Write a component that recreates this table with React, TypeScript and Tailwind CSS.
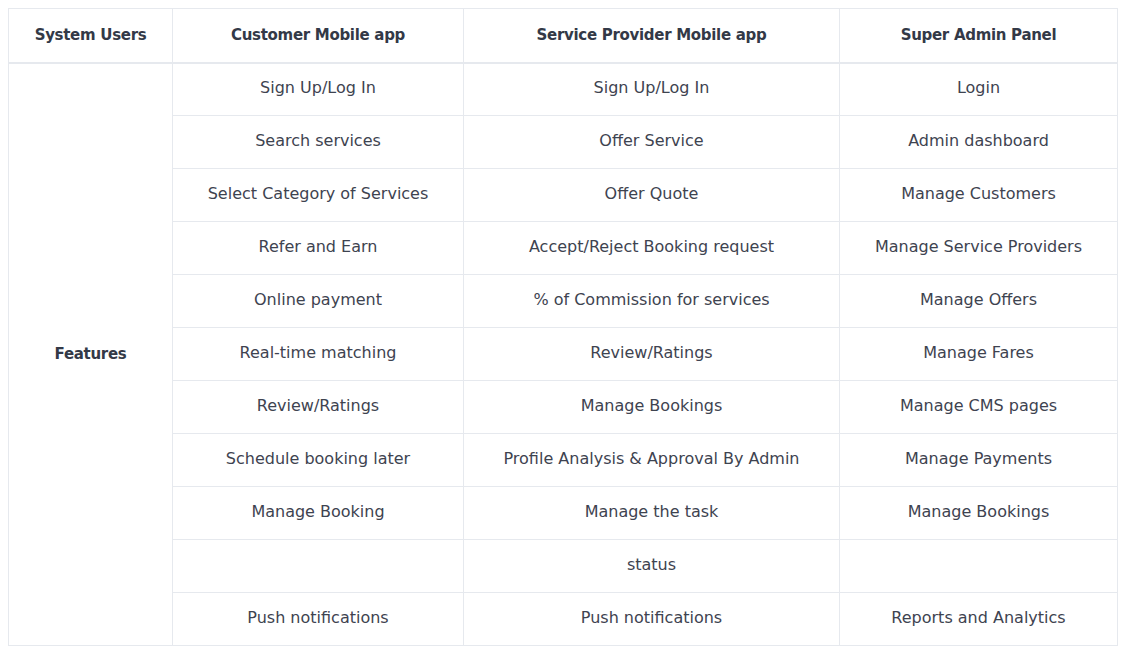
const rows: [string, string, string][] = [
  ["Sign Up/Log In", "Sign Up/Log In", "Login"],
  ["Search services", "Offer Service", "Admin dashboard"],
  ["Select Category of Services", "Offer Quote", "Manage Customers"],
  ["Refer and Earn", "Accept/Reject Booking request", "Manage Service Providers"],
  ["Online payment", "% of Commission for services", "Manage Offers"],
  ["Real-time matching", "Review/Ratings", "Manage Fares"],
  ["Review/Ratings", "Manage Bookings", "Manage CMS pages"],
  ["Schedule booking later", "Profile Analysis & Approval By Admin", "Manage Payments"],
  ["Manage Booking", "Manage the task", "Manage Bookings"],
  ["", "status", ""],
  ["Push notifications", "Push notifications", "Reports and Analytics"],
];

export default function App() {
  return (
    <div className="w-[1128px] h-[656px] bg-white p-2 font-['DejaVu_Sans',sans-serif]">
      <table className="border-collapse w-[1109px] table-fixed text-center">
        <colgroup>
          <col className="w-[164px]" />
          <col className="w-[291px]" />
          <col className="w-[376px]" />
          <col className="w-[278px]" />
        </colgroup>
        <thead>
          <tr className="h-[54px]">
            {["System Users", "Customer Mobile app", "Service Provider Mobile app", "Super Admin Panel"].map((h) => (
              <th
                key={h}
                className="border border-[#e6e9ee] border-b-2 pb-[1px] text-[15px] font-bold text-[#333947] tracking-[-0.3px]"
              >
                {h}
              </th>
            ))}
          </tr>
        </thead>
        <tbody>
          {rows.map((r, i) => (
            <tr key={i} className="h-[53px]">
              {i === 0 && (
                <td
                  rowSpan={rows.length}
                  className="border border-[#e6e9ee] pb-[1px] text-[15px] font-bold text-[#333947] tracking-[-0.3px]"
                >
                  Features
                </td>
              )}
              {r.map((c, j) => (
                <td key={j} className="border border-[#e6e9ee] pb-[2px] text-[16px] text-[#3e4350]">
                  {c}
                </td>
              ))}
            </tr>
          ))}
        </tbody>
      </table>
    </div>
  );
}
